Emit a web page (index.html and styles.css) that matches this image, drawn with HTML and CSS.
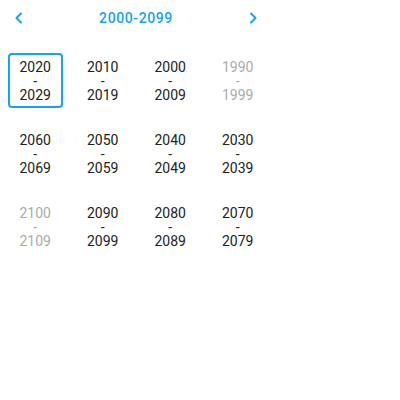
FILE: index.html
```html
<!DOCTYPE html>
<html>
<head>
<meta charset="utf-8">
<link rel="stylesheet" href="styles.css">
</head>
<body>
<div class="picker">
  <div class="header">
    <button class="nav" aria-label="previous">
      <svg width="12" height="12" viewBox="0 0 12 12"><path d="M8 1.5 L3.5 6 L8 10.5" fill="none" stroke="#17a2f0" stroke-width="2" stroke-linecap="round" stroke-linejoin="round"/></svg>
    </button>
    <div class="title">2000-2099</div>
    <button class="nav" aria-label="next">
      <svg width="12" height="12" viewBox="0 0 12 12"><path d="M4 1.5 L8.5 6 L4 10.5" fill="none" stroke="#17a2f0" stroke-width="2" stroke-linecap="round" stroke-linejoin="round"/></svg>
    </button>
  </div>
  <div class="grid">
    <div class="cell"><div class="box selected"><span>2020</span><span class="dash">-</span><span>2029</span></div></div>
    <div class="cell"><div class="box"><span>2010</span><span class="dash">-</span><span>2019</span></div></div>
    <div class="cell"><div class="box"><span>2000</span><span class="dash">-</span><span>2009</span></div></div>
    <div class="cell"><div class="box muted"><span>1990</span><span class="dash">-</span><span>1999</span></div></div>
    <div class="cell"><div class="box"><span>2060</span><span class="dash">-</span><span>2069</span></div></div>
    <div class="cell"><div class="box"><span>2050</span><span class="dash">-</span><span>2059</span></div></div>
    <div class="cell"><div class="box"><span>2040</span><span class="dash">-</span><span>2049</span></div></div>
    <div class="cell"><div class="box"><span>2030</span><span class="dash">-</span><span>2039</span></div></div>
    <div class="cell"><div class="box muted"><span>2100</span><span class="dash">-</span><span>2109</span></div></div>
    <div class="cell"><div class="box"><span>2090</span><span class="dash">-</span><span>2099</span></div></div>
    <div class="cell"><div class="box"><span>2080</span><span class="dash">-</span><span>2089</span></div></div>
    <div class="cell"><div class="box"><span>2070</span><span class="dash">-</span><span>2079</span></div></div>
  </div>
</div>
</body>
</html>
```

FILE: styles.css
```css
html, body {
  margin: 0;
  padding: 0;
  background: #fff;
}
body {
  font-family: Roboto, "Liberation Sans", sans-serif;
}
.picker {
  width: 270px;
  margin-left: 1px;
}
.header {
  display: flex;
  align-items: center;
  height: 36px;
}
.nav {
  width: 36px;
  height: 36px;
  border: none;
  background: none;
  padding: 0;
  display: flex;
  align-items: center;
  justify-content: center;
}
.title {
  flex: 1;
  text-align: center;
  color: #17a2f0;
  font-size: 14px;
  font-weight: 500;
  letter-spacing: 0.6px;
}
.grid {
  margin-top: 8px;
  display: grid;
  grid-template-columns: repeat(4, 1fr);
  grid-auto-rows: 73px;
}
.cell {
  display: flex;
  align-items: center;
  justify-content: center;
}
.box {
  width: 55px;
  height: 55px;
  margin-left: 1px;
  box-sizing: border-box;
  display: flex;
  flex-direction: column;
  justify-content: center;
  align-items: center;
  text-align: center;
  font-size: 14px;
  line-height: 14px;
  color: #222;
  border-radius: 4px;
  border: 2px solid transparent;
}
.box span {
  display: block;
  height: 14px;
}
.box.selected {
  border-color: #17a2f0;
}
.box.muted {
  color: #aaa;
}
```
